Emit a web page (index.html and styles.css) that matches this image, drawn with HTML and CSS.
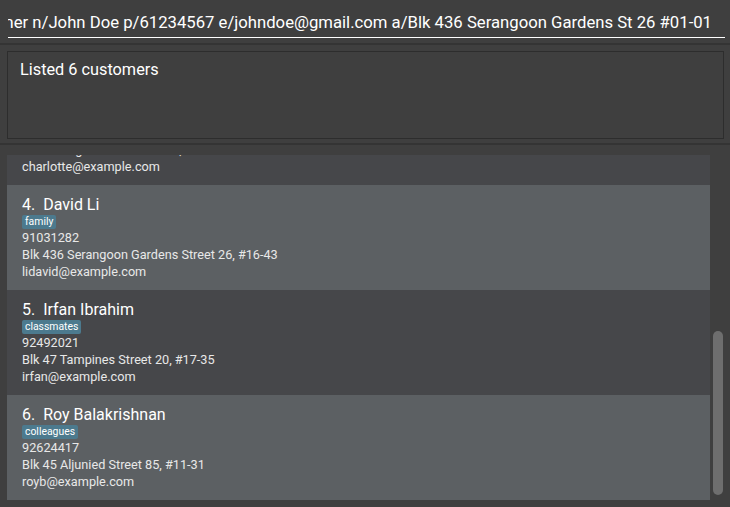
FILE: index.html
```html
<!DOCTYPE html>
<html lang="en">
<head>
<meta charset="utf-8">
<title>Customers</title>
<link rel="stylesheet" href="styles.css">
</head>
<body>
<div class="app">
  <div class="command">
    <div class="command-input"><span class="command-text">customer n/John Doe p/61234567 e/johndoe@gmail.com a/Blk 436 Serangoon Gardens St 26 #01-01</span></div>
  </div>
  <div class="divider"></div>
  <div class="result">
    <div class="result-box">Listed 6 customers</div>
  </div>
  <div class="divider"></div>
  <div class="list-area">
    <div class="list-viewport">
      <div class="list">
        <div class="cell odd">
          <div class="name">3.&nbsp; Charlotte Oliveiro</div>
          <div class="tags"><span class="tag">neighbours</span></div>
          <div class="detail">93210283</div>
          <div class="detail">Blk 11 Ang Mo Kio Street 74, #11-04</div>
          <div class="detail">charlotte@example.com</div>
        </div>
        <div class="cell even">
          <div class="name">4.&nbsp; David Li</div>
          <div class="tags"><span class="tag">family</span></div>
          <div class="detail">91031282</div>
          <div class="detail">Blk 436 Serangoon Gardens Street 26, #16-43</div>
          <div class="detail">lidavid@example.com</div>
        </div>
        <div class="cell odd">
          <div class="name">5.&nbsp; Irfan Ibrahim</div>
          <div class="tags"><span class="tag">classmates</span></div>
          <div class="detail">92492021</div>
          <div class="detail">Blk 47 Tampines Street 20, #17-35</div>
          <div class="detail">irfan@example.com</div>
        </div>
        <div class="cell even">
          <div class="name">6.&nbsp; Roy Balakrishnan</div>
          <div class="tags"><span class="tag">colleagues</span></div>
          <div class="detail">92624417</div>
          <div class="detail">Blk 45 Aljunied Street 85, #11-31</div>
          <div class="detail">royb@example.com</div>
        </div>
      </div>
    </div>
    <div class="scroll-track"><div class="scroll-thumb"></div></div>
  </div>
</div>
</body>
</html>
```
FILE: styles.css
```css
html, body {
  margin: 0;
  padding: 0;
  background: #3f3f3f;
}
body {
  font-family: Roboto, "Noto Sans", "Liberation Sans", sans-serif;
  color: #ffffff;
  width: 730px;
  height: 507px;
  overflow: hidden;
}
.command {
  height: 43px;
  box-sizing: border-box;
  padding: 8px 5px 0 8px;
}
.command-input {
  height: 30px;
  box-sizing: border-box;
  border-bottom: 1px solid #ffffff;
  display: flex;
  justify-content: flex-end;
  align-items: center;
  overflow: hidden;
  padding-right: 13px;
  padding-bottom: 1px;
}
.command-text {
  white-space: nowrap;
  flex-shrink: 0;
  font-size: 16.7px;
  color: #ffffff;
}
.divider {
  height: 2px;
  background: #343434;
}
.result {
  padding: 6px 6px 4px 7px;
}
.result-box {
  height: 88px;
  box-sizing: border-box;
  border: 1px solid #2d2d2d;
  padding: 8px 12px 6px 12px;
  font-size: 16.3px;
  line-height: 20px;
  color: #ffffff;
}
.list-area {
  margin-top: 10px;
  height: 345px;
  display: flex;
  padding-left: 7px;
}
.list-viewport {
  width: 703px;
  height: 345px;
  overflow: hidden;
}
.list {
  margin-top: -75px;
}
.cell {
  height: 105px;
  box-sizing: border-box;
  padding: 9px 15px 0 15px;
}
.cell.odd {
  background: #46474a;
}
.cell.even {
  background: #5c6063;
}
.name {
  font-size: 16px;
  line-height: 21px;
  color: #ffffff;
}
.tags {
  height: 14px;
  display: flex;
}
.tag {
  background: #4c7a8e;
  color: #ffffff;
  font-size: 10.4px;
  line-height: 14px;
  padding: 0 3px;
  border-radius: 2px;
}
.detail {
  font-size: 12.7px;
  line-height: 17px;
  color: #e8e8e8;
}
.scroll-track {
  width: 20px;
  height: 345px;
  padding-left: 3px;
  box-sizing: border-box;
}
.scroll-thumb {
  width: 10px;
  height: 164px;
  margin-top: 176px;
  background: #6e6e6e;
  border-radius: 5px;
}
```
